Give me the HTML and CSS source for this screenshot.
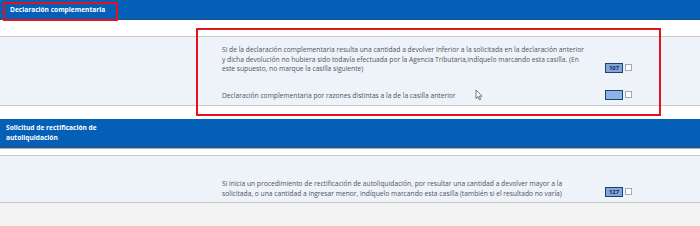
FILE: index.html
```html
<!DOCTYPE html>
<html lang="es">

<head>
    <meta charset="UTF-8">
    <title>Declaración complementaria</title>
    <link rel="stylesheet" href="styles.css">
</head>

<body>
    <div class="form-page">
        <div class="section-bar">
            <span class="section-title">Declaración complementaria</span>
        </div>
        <div class="spacer"></div>
        <div class="panel panel-first">
            <div class="panel-side"></div>
            <div class="panel-body">
                <div class="row">
                    <p class="row-text">Si de la declaración complementaria resulta una cantidad a devolver inferior a la solicitada en la declaración anterior y dicha devolución no hubiera sido todavía efectuada por la Agencia Tributaria,indíquelo marcando esta casilla. (En este supuesto, no marque la casilla siguiente)</p>
                    <span class="casilla">107</span>
                    <span class="check"></span>
                </div>
                <div class="row row-second">
                    <p class="row-text">Declaración complementaria por razones distintas a la de la casilla anterior</p>
                    <span class="casilla casilla-empty"></span>
                    <span class="check"></span>
                </div>
            </div>
        </div>
        <div class="spacer spacer-small"></div>
        <div class="section-bar section-bar-tall">
            <span class="section-title">Solicitud de rectificación de<br>autoliquidación</span>
        </div>
        <div class="spacer spacer-thin"></div>
        <div class="panel panel-third">
            <div class="panel-side"></div>
            <div class="panel-body">
                <div class="row">
                    <p class="row-text">Si inicia un procedimiento de rectificación de autoliquidación, por resultar una cantidad a devolver mayor a la solicitada, o una cantidad a ingresar menor, indíquelo marcando esta casilla (también si el resultado no varía)</p>
                    <span class="casilla">127</span>
                    <span class="check"></span>
                </div>
            </div>
        </div>
        <div class="footer-fill"></div>

        <div class="mark mark-title"></div>
        <div class="mark mark-panel"></div>
        <svg class="pointer" width="8" height="12" viewBox="0 0 8 12">
            <path d="M1 1 L1 9.5 L3 7.6 L4.4 10.8 L5.6 10.3 L4.3 7.2 L7 7.2 Z" fill="#fff" stroke="#555" stroke-width="0.8" stroke-linejoin="round"/>
        </svg>
    </div>
</body>

</html>
```

FILE: styles.css
```css
body {
    margin: 0;
    padding: 0;
    background-color: #fff;
    font-family: "Open Sans", "Noto Sans", sans-serif;
}

.form-page {
    position: relative;
    width: 700px;
    height: 226px;
    overflow: hidden;
}

.section-bar {
    height: 19px;
    background-color: #045fb6;
    border-bottom: 1px solid #1c4f86;
    padding-left: 10px;
    display: flex;
    align-items: center;
}

.section-bar-tall {
    height: 27px;
    padding-left: 6px;
    border-bottom: 2px solid #20558e;
}

.section-title {
    color: #fff;
    font-size: 6.6px;
    font-weight: bold;
    line-height: 9.5px;
}

.spacer {
    height: 16px;
}

.spacer-small {
    height: 13px;
}

.spacer-thin {
    height: 6px;
    border-top: 1px solid #9fb6b0;
}

.panel {
    display: flex;
    background-color: #eef2f9;
    border-top: 1px solid #c6c9cf;
    border-bottom: 1px solid #c6c9cf;
}

.panel-side {
    width: 197px;
}

.panel-body {
    flex: 1;
    padding-left: 25px;
}

.panel-first .panel-body {
    padding-top: 8px;
    height: 60px;
}

.panel-third .panel-body {
    padding-top: 23px;
    height: 23px;
}

.row {
    display: flex;
    align-items: flex-end;
}

.row-second {
    margin-top: 16px;
}

.row-text {
    width: 365px;
    margin: 0 18px 0 0;
    color: #50545b;
    font-size: 6.7px;
    line-height: 9.5px;
}

.casilla {
    width: 16px;
    height: 8px;
    border: 1px solid #23406a;
    background-color: #7fa6d9;
    color: #102a52;
    font-size: 5.8px;
    font-weight: bold;
    line-height: 8px;
    text-align: center;
    margin-bottom: 1px;
}

.casilla-empty {
    background-color: #8cb3e6;
}

.check {
    width: 5px;
    height: 5px;
    border: 1px solid #a9a9a9;
    background-color: #fff;
    margin-left: 2px;
    margin-bottom: 3px;
}

.footer-fill {
    height: 30px;
    background-color: #f3f3f3;
}

.mark {
    position: absolute;
    border: 2px solid #e3121c;
}

.mark-title {
    left: 3px;
    top: 2px;
    width: 111px;
    height: 15px;
}

.mark-panel {
    left: 196px;
    top: 28px;
    width: 461px;
    height: 84px;
}

.pointer {
    position: absolute;
    left: 475px;
    top: 89px;
}
```
